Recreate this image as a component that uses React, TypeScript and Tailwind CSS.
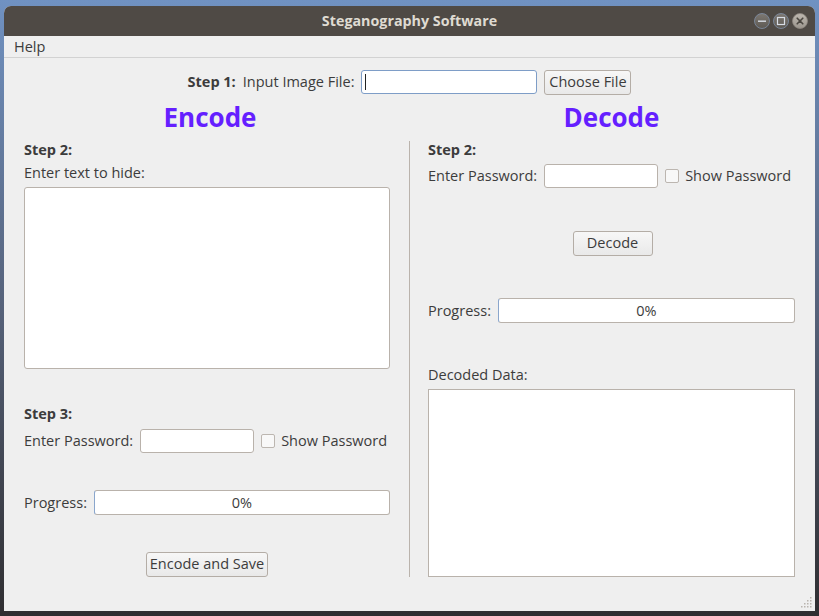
import React from 'react';

const Btn = ({ label, className = '' }: { label: string; className?: string }) => (
  <button
    type="button"
    className={`h-[25px] border border-[#b4ada6] rounded-[3px] bg-linear-to-b from-[#f7f7f7] to-[#e9e9e9] text-[#3c3c3c] text-[14.5px] leading-none ${className}`}
  >
    {label}
  </button>
);

const Box = ({ className = '' }: { className?: string }) => (
  <div className={`bg-white border border-[#b9b2ab] rounded-[3px] ${className}`} />
);

const Check = ({ label }: { label: string }) => (
  <label className="flex items-center ml-[7px]">
    <span className="w-[14px] h-[14px] border border-[#bcb6b0] rounded-[2px] bg-[#f8f8f8]" />
    <span className="ml-[6px]">{label}</span>
  </label>
);

const Progress = () => (
  <div className="flex items-center h-[25px]">
    <span>Progress:</span>
    <div className="ml-[7px] flex-1 h-[25px] bg-white border border-[#b9b2ab] border-l-[#8aa6cc] rounded-[3px] flex items-center justify-center">
      0%
    </div>
  </div>
);

const WinBtn = ({ kind }: { kind: 'min' | 'max' | 'close' }) => (
  <svg width="16" height="16" viewBox="0 0 16 16">
    <defs>
      <linearGradient id={`g-${kind}`} x1="0" y1="0" x2="0" y2="1">
        <stop offset="0" stopColor={kind === 'close' ? '#bdb7af' : '#7d7872'} />
        <stop offset="1" stopColor={kind === 'close' ? '#9c968e' : '#5d5953'} />
      </linearGradient>
    </defs>
    <circle cx="8" cy="8" r="7.5" fill={`url(#g-${kind})`} stroke={kind === 'close' ? '#8d877f' : '#8090a8'} strokeWidth="0.8" />
    {kind === 'min' && <rect x="4" y="7.5" width="8" height="1.4" fill="#d8dde6" />}
    {kind === 'max' && <rect x="4.5" y="4.5" width="7" height="7" fill="none" stroke="#d8dde6" strokeWidth="1.2" />}
    {kind === 'close' && (
      <path d="M5.2 5.2 L10.8 10.8 M10.8 5.2 L5.2 10.8" stroke="#4a4640" strokeWidth="1.6" strokeLinecap="round" />
    )}
  </svg>
);

export default function App() {
  return (
    <div className="w-[819px] h-[616px] overflow-hidden bg-linear-to-b from-[#7092c2] via-[#56627a] to-[#2f2e31] pl-[4px] pt-[6px] font-['Open_Sans',sans-serif] text-[14.5px] text-[#3c3c3c]">
      <div className="w-[811px] h-[605px] flex flex-col bg-[#efefef] rounded-t-[7px] overflow-hidden">
        {/* Title bar */}
        <div className="h-[30px] shrink-0 bg-[#4f4a45] grid grid-cols-[1fr_auto_1fr] items-center">
          <div />
          <div className="font-bold text-[14.3px] text-[#dfdbd2]">Steganography Software</div>
          <div className="flex justify-end items-center gap-[3px] pr-[7px]">
            <WinBtn kind="min" />
            <WinBtn kind="max" />
            <WinBtn kind="close" />
          </div>
        </div>

        {/* Menu bar */}
        <div className="h-[22px] shrink-0 border-b border-[#d2d2d2] px-[10px] flex items-center">Help</div>

        {/* Step 1 */}
        <div className="mt-[12px] h-[24px] flex items-center justify-center">
          <span className="font-bold">Step 1:</span>
          <span className="ml-[7px]">Input Image File:</span>
          <div className="ml-[7px] w-[176px] h-[24px] bg-white border border-[#7e9dc7] rounded-[3px] flex items-center pl-[3px]">
            <div className="w-px h-[16px] bg-[#222]" />
          </div>
          <Btn label="Choose File" className="ml-[7px] w-[87px]" />
        </div>

        {/* Headings */}
        <div className="flex px-[20px] h-[47px] items-center leading-[47px] text-[26px] font-bold text-[#651fff]">
          <div className="w-[366px] text-center pl-[6px]">Encode</div>
          <div className="w-[38px]" />
          <div className="w-[367px] text-center">Decode</div>
        </div>

        {/* Columns */}
        <div className="flex px-[20px] h-[436px]">
          {/* Encode */}
          <div className="w-[366px] flex flex-col">
            <div className="h-[18px] leading-[18px] font-bold">Step 2:</div>
            <div className="mt-[5px] h-[18px] leading-[18px]">Enter text to hide:</div>
            <Box className="mt-[5px] h-[182px]" />
            <div className="mt-[36px] h-[18px] leading-[18px] font-bold">Step 3:</div>
            <div className="mt-[6px] h-[24px] flex items-center">
              <span>Enter Password:</span>
              <Box className="ml-[7px] w-[114px] h-[24px]" />
              <Check label="Show Password" />
            </div>
            <div className="mt-[37px]">
              <Progress />
            </div>
            <div className="mt-[37px] flex justify-center">
              <Btn label="Encode and Save" className="w-[122px]" />
            </div>
          </div>

          {/* Divider */}
          <div className="ml-[19px] w-px h-[436px] bg-[#bab3ac]" />

          {/* Decode */}
          <div className="ml-[18px] w-[367px] flex flex-col">
            <div className="h-[18px] leading-[18px] font-bold">Step 2:</div>
            <div className="mt-[5px] h-[24px] flex items-center">
              <span>Enter Password:</span>
              <Box className="ml-[7px] w-[114px] h-[24px]" />
              <Check label="Show Password" />
            </div>
            <div className="mt-[43px] flex justify-center pl-[2px]">
              <Btn label="Decode" className="w-[80px]" />
            </div>
            <div className="mt-[42px]">
              <Progress />
            </div>
            <div className="mt-[43px] h-[18px] leading-[18px]">Decoded Data:</div>
            <Box className="mt-[5px] h-[188px] rounded-none" />
          </div>
        </div>

        {/* Resize grip */}
        <div className="flex-1 flex justify-end items-end pr-[3px] pb-[3px]">
          <svg width="11" height="11" viewBox="0 0 11 11">
            {[
              [9, 1],
              [9, 4], [6, 4],
              [9, 7], [6, 7], [3, 7],
              [9, 10], [6, 10], [3, 10], [0, 10],
            ].map(([x, y], i) => (
              <rect key={i} x={x} y={y - 1} width="1.5" height="1.5" fill="#b9b4ae" />
            ))}
          </svg>
        </div>
      </div>
    </div>
  );
}
